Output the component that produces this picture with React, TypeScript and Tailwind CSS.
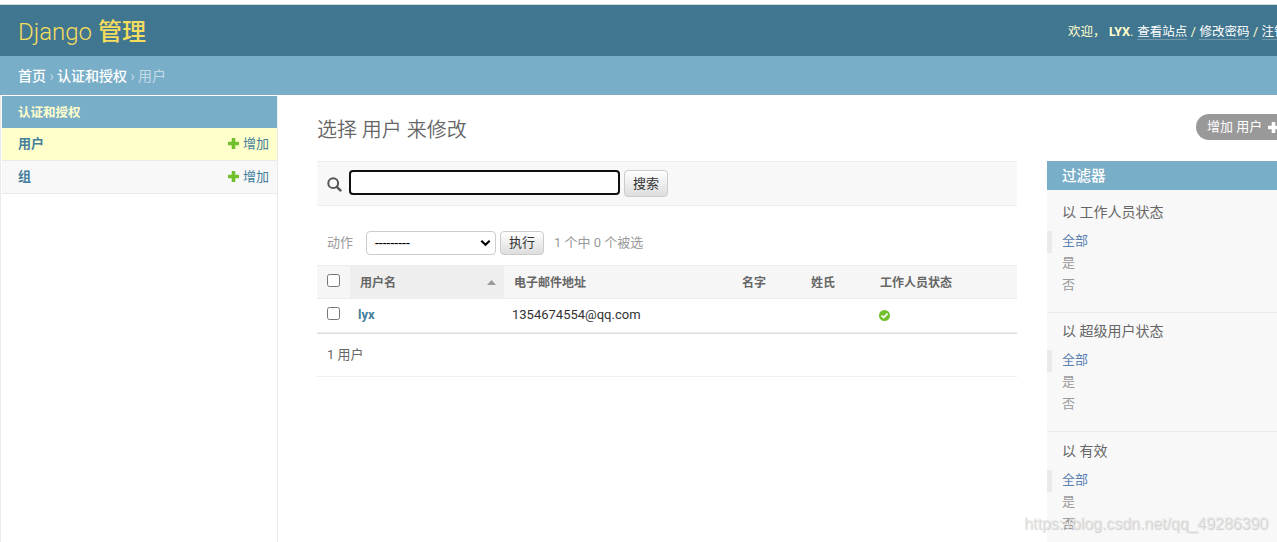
import React from "react";

function Plus({ className }: { className: string }) {
  return (
    <svg viewBox="0 0 11 11" className={className} fill="currentColor">
      <path d="M3.700 .6Q3.700 0 4.300 0h2.400Q7.300 0 7.300 .6V3.700h3.100q.6 0 .6.6v2.400q0 .6-.6.6H7.300v3.100q0 .6-.6.6H4.300Q3.700 11 3.700 10.400V7.300H.6Q0 7.300 0 6.700V4.300Q0 3.700 .6 3.700H3.700z" />
    </svg>
  );
}

function SideRow({ name, active }: { name: string; active?: boolean }) {
  return (
    <div
      className={
        "flex h-[33px] items-center border-b border-[#eaeaea] pr-2 pb-px pl-4 text-[13px] leading-[30px] text-[#447e9b] " +
        (active ? "bg-[#ffffcc]" : "bg-[#f8f8f8]")
      }
    >
      <span className="font-bold">{name}</span>
      <Plus className="mr-1 ml-auto size-[11px] text-[#70bf2b]" />
      <span>增加</span>
    </div>
  );
}

function HeaderLink({ children }: { children: React.ReactNode }) {
  return <a className="h-[17px] border-b border-[#7398aa] leading-[18px] text-white">{children}</a>;
}

function Filter({ title, height }: { title: string; height: string }) {
  return (
    <section className={"border-b border-[#eaeaea] " + height}>
      <h3 className="pl-[15px] text-[14px] leading-5 text-[#666]">{title}</h3>
      <ul className="mt-[9px] text-[13px] leading-5 text-[#999]">
        <li className="h-[22px] border-l-[5px] border-[#eaeaea] pl-[10px] text-[#5b80b2]">全部</li>
        <li className="h-[22px] pl-[15px]">是</li>
        <li className="h-[22px] pl-[15px]">否</li>
      </ul>
    </section>
  );
}

function Box() {
  return <span className="block size-[13px] rounded-[2.500px] border border-[#767676] bg-white" />;
}

export default function App() {
  return (
    <div className="relative flex h-[542px] w-[1277px] flex-col overflow-hidden bg-white font-[Roboto,'Noto_Sans_CJK_SC',sans-serif] whitespace-nowrap text-[#333]">
      <div className="h-[5px] shrink-0 border-b border-[#d5d8da]" />
      <header className="flex h-[51px] shrink-0 items-center bg-[#417690] pt-[2px] pl-[18px]">
        <h1 className="w-[1050px] shrink-0 text-[24px] leading-8 font-light text-[#f5dd5d]">
          Django <span className="font-medium">管理</span>
        </h1>
        <div className="flex shrink-0 items-center text-[12.500px] leading-[18px] text-[#ffffcc]">
          <span className="w-[41px]">欢迎，</span>
          <strong className="text-[12.500px] font-bold">LYX</strong>
          <span className="mr-1">.</span>
          <HeaderLink>查看站点</HeaderLink>
          <span className="mx-[3.500px]">/</span>
          <HeaderLink>修改密码</HeaderLink>
          <span className="mx-[3.500px]">/</span>
          <HeaderLink>注销</HeaderLink>
        </div>
      </header>
      <nav className="flex h-[39px] shrink-0 items-center bg-[#79aec8] pt-[2px] pl-[18px] text-[14px] text-[#c4dce8]">
        <span className="font-medium text-white">首页</span>
        <span className="w-[11px] text-center">›</span>
        <span className="font-medium text-white">认证和授权</span>
        <span className="w-[11px] text-center">›</span>
        <span>用户</span>
      </nav>
      <div className="flex min-h-0 flex-1">
        <aside className="w-[278px] shrink-0 border-r border-l border-[#eaeaea] pt-px pl-px">
          <h2 className="h-8 bg-[#79aec8] pt-px pl-4 text-[12.500px] leading-8 font-bold text-[#ffffcc]">认证和授权</h2>
          <SideRow name="用户" active />
          <SideRow name="组" />
        </aside>
        <main className="w-[769px] shrink-0 pr-[30px] pl-[39px]">
          <h1 className="h-[66px] pt-[20px] text-[20px] leading-[30px] font-[350] text-[#666]">选择 用户 来修改</h1>
          <div className="flex h-[45px] items-start border-y border-[#eee] bg-[#f8f8f8] pt-2 pl-[10px]">
            <svg viewBox="0 0 15 15" className="mt-[7px] mr-[7px] size-[15px]" fill="none" stroke="#555">
              <circle cx="6.200" cy="6.200" r="4.900" strokeWidth="2" />
              <path d="M9.800 9.800l3.600 3.600" strokeWidth="2.400" strokeLinecap="round" />
            </svg>
            <span className="mr-1 h-[25px] w-[271px] rounded-[4px] border-2 border-[#101010] bg-white" />
            <button className="h-[27px] w-11 rounded-[4px] border border-[#ccc] bg-linear-to-b from-white to-[#ddd] text-[13px] leading-[25px]">
              搜索
            </button>
          </div>
          <div className="flex h-[59px] items-start pt-[25px] pl-[10px] text-[13px] leading-6 text-[#999]">
            <span className="w-[39px]">动作</span>
            <div className="mr-1 flex h-6 w-[130px] items-center rounded-[4px] border border-[#ccc] bg-white pr-[4px] pl-[8px] text-[14px] text-black">
              <span>---------</span>
              <svg viewBox="0 0 11 8" className="ml-auto h-2 w-[11px]" fill="none" stroke="currentColor" strokeWidth="2.200">
                <path d="M1.300 1.700l4.200 4 4.200-4" />
              </svg>
            </div>
            <button className="mr-[10px] h-6 w-11 rounded-[4px] border border-[#ccc] bg-linear-to-b from-white to-[#ddd] leading-[22px] text-[#333]">
              执行
            </button>
            <span>1 个中 0 个被选</span>
          </div>
          <div className="flex h-[34px] items-center border-y border-[#eee] bg-[#f6f6f6] text-[12px] font-bold text-[#666]">
            <div className="w-[33px] pb-[3px] pl-[10px]"><Box /></div>
            <div className="flex h-full w-[154px] items-center bg-[#eee] pr-2 pl-[10px]">
              <span className="pt-[2px]">用户名</span>
              <svg viewBox="0 0 9 5" className="ml-auto h-[5px] w-[9px]" fill="#999"><path d="M0 5L4.500 0 9 5z" /></svg>
            </div>
            <span className="w-[228px] pt-[2px] pl-[10px]">电子邮件地址</span>
            <span className="w-[69px] pt-[2px] pl-[10px]">名字</span>
            <span className="w-[69px] pt-[2px] pl-[10px]">姓氏</span>
            <span className="pt-[2px] pl-[10px]">工作人员状态</span>
          </div>
          <div className="h-[35px] border-b border-[#ddd]">
            <div className="flex h-[34px] items-center border-b border-[#eee] text-[13px]">
              <div className="w-[41px] pb-[4px] pl-[10px]"><Box /></div>
              <span className="w-[154px] pb-[2px] font-bold text-[#447e9b]">lyx</span>
              <span className="w-[367px] pb-[2px]">1354674554@qq.com</span>
              <svg viewBox="0 0 11 11" className="size-[11px]">
                <circle cx="5.500" cy="5.500" r="5.500" fill="#70bf2b" />
                <path d="M2.500 5.500l2.100 2.100 3.900-3.900" fill="none" stroke="#fff" strokeWidth="1.700" />
              </svg>
            </div>
          </div>
          <div className="h-[43px] border-b border-[#eee] pl-[10px] text-[13px] leading-[41px] text-[#666]">1 用户</div>
        </main>
        <div className="w-[230px] shrink-0">
          <div className="flex h-[66px] pt-[19px] pl-[149px]">
            <a className="flex h-[26px] w-[95px] shrink-0 items-center rounded-full bg-[#999] pl-[11px] text-[13px] text-white">
              增加 用户 <Plus className="ml-[6px] size-[11px]" />
            </a>
          </div>
          <div className="h-[400px] bg-[#f8f8f8]">
            <h2 className="mb-3 h-[29px] bg-[#79aec8] pt-px pl-[15px] text-[14.500px] leading-[29px] font-medium text-white">过滤器</h2>
            <Filter title="以 工作人员状态" height="mb-[8px] h-[111px]" />
            <Filter title="以 超级用户状态" height="mb-[9px] h-[111px]" />
            <Filter title="以 有效" height="h-[111px]" />
          </div>
        </div>
      </div>
      <span className="absolute top-[514px] left-[1024px] font-['Liberation_Sans',sans-serif] text-[16px] leading-5 tracking-[-0.05px] text-[#e6e6e6]/70 [text-shadow:1px_1px_1px_#0000002e]">
        https://blog.csdn.net/qq_49286390
      </span>
    </div>
  );
}
